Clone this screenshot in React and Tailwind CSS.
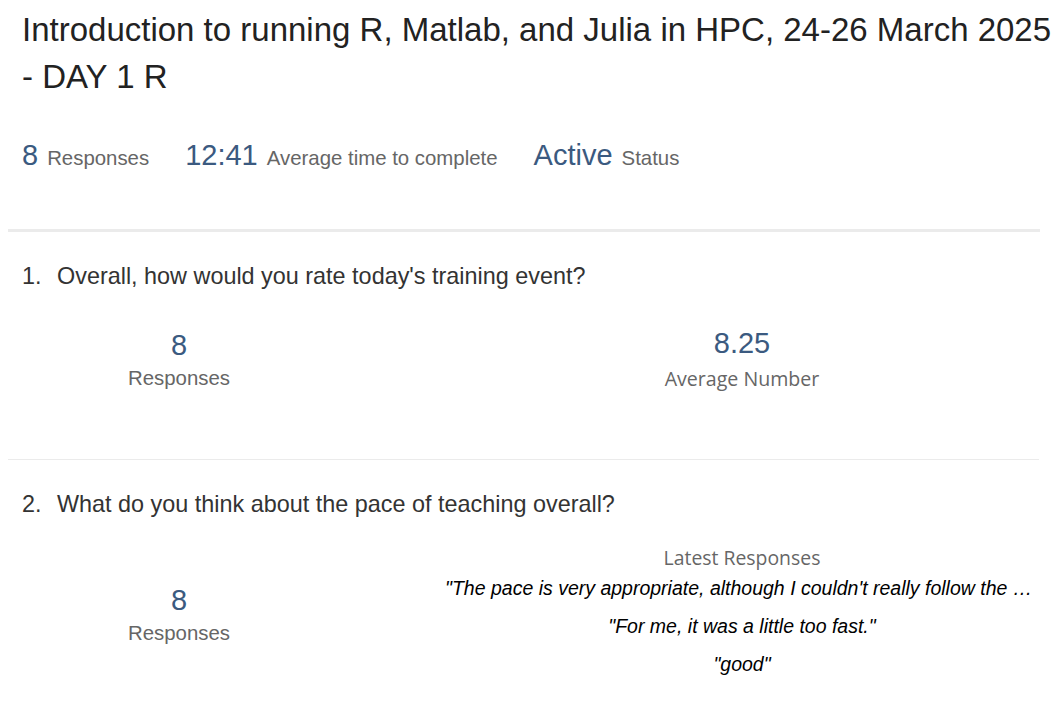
import React from 'react'

const sans = { fontFamily: '"Liberation Sans", Arial, sans-serif' }

const Stat = ({ value, label }) => (
  <div className="flex items-baseline gap-[9px]">
    <span className="text-[29px] text-[#3b5a80]">{value}</span>
    <span className="text-[20.4px] text-[#666]">{label}</span>
  </div>
)

const Question = ({ num, text }) => (
  <div className="flex items-baseline px-[14px] text-[23.4px] text-[#333]">
    <span className="w-[35px]">{num}.</span>
    <span>{text}</span>
  </div>
)

const Count = ({ value, label, labelFont, labelSize, labelLeading }) => (
  <div className="flex flex-col items-center">
    <span className="text-[29px] leading-[34px] text-[#3b5a80]">{value}</span>
    <span className={`text-[#666] ${labelLeading} ${labelSize} ${labelFont}`}>{label}</span>
  </div>
)

const quotes = [
  "\"The pace is very appropriate, although I couldn't really follow the rest of the session because of my own setup\"",
  '"For me, it was a little too fast."',
  '"good"',
]

export default function App() {
  return (
    <div className="bg-white min-h-screen w-[1062px] px-2" style={sans}>
      <h1 className="pl-[14px] pt-[6px] text-[33px] leading-[47px] text-[#222]">
        Introduction to running R, Matlab, and Julia in HPC, 24-26 March 2025 - DAY 1 R
      </h1>

      <div className="flex items-baseline gap-[36px] px-[14px] mt-[34px]">
        <Stat value="8" label="Responses" />
        <Stat value="12:41" label="Average time to complete" />
        <Stat value="Active" label="Status" />
      </div>

      <div className="mt-[51px] h-[3px] w-[1032px] bg-[#ebebeb]" />

      <div className="pt-[27px]">
        <Question num="1" text="Overall, how would you rate today's training event?" />
        <div className="flex items-start mt-[34px]">
          <div className="w-[342px]">
            <Count value="8" label="Responses" labelFont="" labelSize="text-[20.4px]" labelLeading="leading-[32px]" />
          </div>
          <div className="w-[620px] ml-[82px] -mt-[2px]">
            <Count value="8.25" label="Average Number" labelFont="font-['Open_Sans']" labelSize="text-[19.6px]" labelLeading="leading-[38px]" />
          </div>
        </div>
      </div>

      <div className="mt-[61px] h-px w-[1031px] bg-[#ebebeb]" />

      <div className="pt-[27px]">
        <Question num="2" text="What do you think about the pace of teaching overall?" />
        <div className="flex mt-[22px]">
          <div className="w-[342px] flex items-center justify-center pt-[10px]">
            <Count value="8" label="Responses" labelFont="" labelSize="text-[20.4px]" labelLeading="leading-[32px]" />
          </div>
          <div className="w-[594px] ml-[95px] flex flex-col items-center">
            <span className="text-[19.4px] leading-[28px] text-[#666] font-['Open_Sans']">Latest Responses</span>
            <div className="w-full mt-[2px] flex flex-col items-center gap-[10px] text-[19.5px] leading-[28px] italic text-black">
              {quotes.map((q, i) => (
                <p key={i} className={`w-full truncate text-center ${i === 0 ? 'pr-[6px]' : ''}`}>{q}</p>
              ))}
            </div>
          </div>
        </div>
      </div>
    </div>
  )
}
